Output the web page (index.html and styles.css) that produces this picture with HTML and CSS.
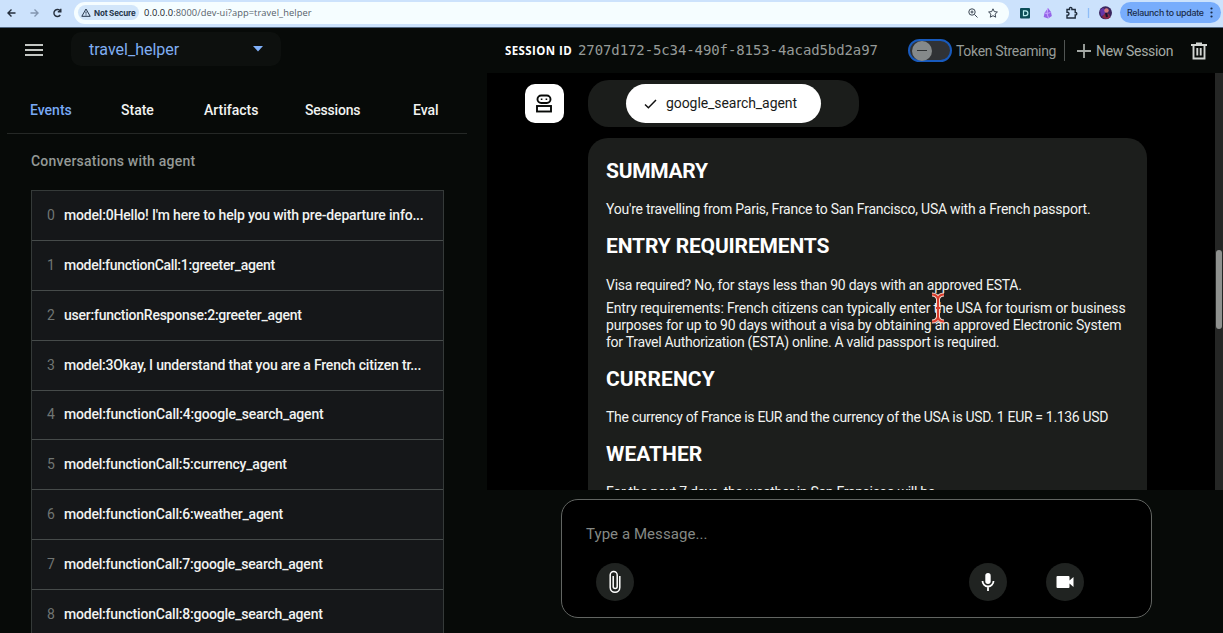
FILE: index.html
```html
<!DOCTYPE html>
<html lang="en">
<head>
<meta charset="utf-8">
<title>travel_helper</title>
<link rel="stylesheet" href="styles.css">
</head>
<body>
<header class="browser">
  <svg class="nav" width="64" height="14" viewBox="0 0 64 14" fill="none" stroke="#252f3d" stroke-width="1.4">
    <path d="M8.500 7H1M4.500 3.500L1 7l3.500 3.500"/>
    <path d="M23.500 7H31M27.500 3.500L31 7l-3.500 3.500" stroke="#8396b0"/>
    <path d="M53.300 9a3.500 3.500 0 1 1 0-4M53.800 2.800v3h-3"/>
  </svg>
  <div class="address">
    <span class="secure"><svg width="10" height="9" viewBox="0 0 10 9" fill="none" stroke="#26364b"><path d="M5 1L9.200 8.300H.8zM5 3.500v2.200M5 6.400v1"/></svg><b>Not Secure</b></span>
    <span class="url"><i>0.0.0.0</i>:8000/dev-ui?app=travel_helper</span>
    <svg class="marks" width="34" height="12" viewBox="0 0 34 12" fill="none" stroke="#3c4754">
      <circle cx="5" cy="5" r="3.200"/><path d="M7.500 7.500L10.500 10.500M3.500 5h3M5 3.500v3"/>
      <path d="M26 1.800l1.300 2.800 3.100.4-2.300 2.100.6 3.100L26 8.700l-2.700 1.500.6-3.100L21.600 5l3.100-.4z"/>
    </svg>
  </div>
  <div class="extensions">
    <svg width="96" height="14" viewBox="0 0 96 14">
      <rect x="0" y="2" width="10" height="10.500" rx="1" fill="#0b4d57"/><path d="M3.500 4.800h2a2.400 2.400 0 0 1 0 4.800h-2z" fill="none" stroke="#b8eef0" stroke-width="1.200"/>
      <path d="M28 2l3 4 .8 4-3.600 2.500-4.500-1.500.8-4z" fill="#9564e8"/><path d="M27.800 2.500l-.8 5 1.500 4.500M24.500 7l2.500.5 3.500-1" stroke="#c8a7ff" fill="none"/>
      <path d="M47 3.500h2.500V2.600a1.200 1.200 0 0 1 2.400 0v.9h3.300v3h.4a1.200 1.200 0 0 1 0 2.400h-.4v3.100H47V9.300h.5a1.500 1.500 0 0 0 0-3H47z" fill="none" stroke="#202d3d" stroke-width="1.400"/>
      <path d="M68.500 2v10" stroke="#8fbdf7" stroke-width="1.300"/>
      <circle cx="85.500" cy="6.800" r="6.500" fill="#3a255e"/><path d="M80 4l3-2 3 2-1 5-4 1z" fill="#6435a8"/><circle cx="86.500" cy="4.500" r="2.200" fill="#d5787d"/><path d="M82 11l3-4 4 1 1.500 3.500A7 7 0 0 1 82 11z" fill="#8a2747"/><path d="M86 7l1 4" stroke="#1c152b" stroke-width="2"/>
    </svg>
  </div>
  <div class="relaunch"><span>Relaunch to update</span><svg width="3" height="11" fill="#1b2c47"><circle cx="1.500" cy="1.500" r="1.100"/><circle cx="1.500" cy="5.500" r="1.100"/><circle cx="1.500" cy="9.500" r="1.100"/></svg></div>
</header>
<div class="app">
  <aside class="sidebar">
    <div class="picker-row">
      <svg class="menu" width="18" height="14" stroke="#c3c7c3" stroke-width="1.900"><path d="M0 2h18M0 7h18M0 12h18"/></svg>
      <div class="picker"><span>travel_helper</span><svg width="10" height="6" fill="#80b1fa"><path d="M0 0h10L5 5.500z"/></svg></div>
    </div>
    <nav class="tabs"><span class="tab active">Events</span><span class="tab state">State</span><span class="tab artifacts">Artifacts</span><span class="tab sessions">Sessions</span><span class="tab">Eval</span></nav>
    <h2 class="conversations">Conversations with agent</h2>
    <div class="events">
      <div class="event"><i>0</i><span class="greeting">model:0Hello! I'm here to help you with pre-departure info...</span></div>
      <div class="event"><i>1</i><span class="greeter">model:functionCall:1:greeter_agent</span></div>
      <div class="event"><i>2</i><span class="response">user:functionResponse:2:greeter_agent</span></div>
      <div class="event"><i>3</i><span>model:3Okay, I understand that you are a French citizen tr...</span></div>
      <div class="event"><i>4</i><span class="greeting">model:functionCall:4:google_search_agent</span></div>
      <div class="event"><i>5</i><span>model:functionCall:5:currency_agent</span></div>
      <div class="event"><i>6</i><span>model:functionCall:6:weather_agent</span></div>
      <div class="event"><i>7</i><span>model:functionCall:7:google_search_agent</span></div>
      <div class="event"><i>8</i><span>model:functionCall:8:google_search_agent</span></div>
    </div>
  </aside>
  <main class="main">
    <div class="toolbar">
      <b class="session-label">SESSION ID</b><span class="session-id">2707d172-5c34-490f-8153-4acad5bd2a97</span>
      <span class="toggle"><span class="knob"></span></span><span class="token">Token Streaming</span>
      <span class="divider"></span>
      <svg class="plus" width="14" height="14" stroke="#a5aaa6" stroke-width="1.800"><path d="M0 7h14M7 0v14"/></svg><span class="new">New Session</span>
      <svg class="trash" width="16" height="18" fill="none" stroke="#d2d5d2" stroke-width="1.900"><path d="M0 3h16M5 1.400h6M2.500 3v13.500h11V3M6.300 6v7.500M9.700 6v7.500"/></svg>
    </div>
    <section class="chat">
      <div class="messages">
        <div class="call-row">
          <div class="avatar"><svg width="18" height="20" viewBox="0 0 18 20" fill="none" stroke="#080a08" stroke-width="1.900"><rect x="2.500" y="1.500" width="13" height="7.500" rx="3.700"/><rect x="2" y="12" width="14" height="5.500"/><path d="M5.800 5.200h1.600M10.600 5.200h1.600" stroke-width="1.500"/></svg></div>
          <div class="call"><div class="chip"><svg width="13" height="10" fill="none" stroke="#111" stroke-width="1.500"><path d="M1 5.500l3.400 3.200L12 1"/></svg><span>google_search_agent</span></div></div>
        </div>
        <article class="reply">
          <h3 class="h-summary">SUMMARY</h3>
          <p class="p-summary">You're travelling from Paris, France to San Francisco, USA with a French passport.</p>
          <h3 class="h-entry">ENTRY REQUIREMENTS</h3>
          <p class="p-visa">Visa required? No, for stays less than 90 days with an approved ESTA.</p>
          <p class="p-entry">Entry requirements: French citizens can typically enter the USA for tourism or business<br>purposes for up to 90 days without a visa by obtaining an approved Electronic System<br><span class="last-line">for Travel Authorization (ESTA) online. A valid passport is required.</span></p>
          <h3 class="h-currency">CURRENCY</h3>
          <p class="p-currency">The currency of France is EUR and the currency of the USA is USD. 1 EUR = 1.136 USD</p>
          <h3 class="h-weather">WEATHER</h3>
          <p class="p-weather">For the next 7 days, the weather in San Francisco will be</p>
        </article>
      </div>
      <div class="scrollbar"><div class="thumb"></div></div>
    </section>
    <div class="composer">
      <div class="placeholder">Type a Message...</div>
      <div class="actions">
        <span class="round"><svg width="12" height="24" fill="none" stroke="#fff" stroke-width="1.500"><path d="M10.800 6v11.500a4.800 4.800 0 0 1-9.600 0V5a3.500 3.500 0 0 1 7 0v11.500a2 2 0 0 1-4 0V6"/></svg></span>
        <span class="round mic"><svg width="14" height="20"><rect x="4.300" y="1" width="5.400" height="11" rx="2.700" fill="#fff"/><path d="M1.500 9a5.500 5.500 0 0 0 11 0M7 14.500V19" fill="none" stroke="#fff" stroke-width="1.800"/></svg></span>
        <span class="round"><svg width="18" height="14" fill="#fff"><path d="M1.500 1h11q1 0 1 1v3.500L17.500 2v10l-4-3.500V12q0 1-1 1h-11q-1 0-1-1V2q0-1 1-1z"/></svg></span>
      </div>
    </div>
  </main>
</div>
<svg class="cursor" width="16" height="32" viewBox="0 0 16 32" fill="none"><path d="M2 2.500q5 0 6 4.500q1-4.500 6-4.500M8 7v18M2 29.500q5 0 6-4.500q1 4.500 6 4.500M5.500 16h5" stroke="#f4d9ce" stroke-width="4"/><path d="M2 2.500q5 0 6 4.500q1-4.500 6-4.500M8 7v18M2 29.500q5 0 6-4.500q1 4.500 6 4.500M6 16h4" stroke="#d83b2b" stroke-width="2"/></svg>
</body>
</html>
```
FILE: styles.css
```css
* { box-sizing: border-box; }
body { margin: 0; width: 1223px; height: 633px; overflow: hidden; background: #000; color: #f1f3f1; font: 500 14px/17px Roboto, sans-serif; }
svg { display: block; flex: none; }
i { font-style: normal; }
h2, h3, p { margin: 0; white-space: nowrap; }
span, b { white-space: nowrap; }

.browser { height: 28px; background: #cce2fc; border-bottom: 1px solid #526780; display: flex; align-items: center; padding: 0 1px 2px 7px; }
.address { margin-left: 3px; width: 935px; height: 22px; border-radius: 11px; background: #f5fdff; display: flex; align-items: center; padding: 0 8px 0 4px; }
.secure { width: 61px; height: 15px; border-radius: 8px; background: #d2e6fa; display: flex; align-items: center; gap: 3px; padding-left: 3px; font: 8px/12px Inter, sans-serif; color: #26364b; letter-spacing: -.18px; }
.url { margin-left: 5px; font: 9.300px/14px "Open Sans", sans-serif; color: #56616a; letter-spacing: .08px; }
.url i { color: #18242c; }
.marks { margin-left: auto; }
.extensions { margin-left: 11px; width: 96px; }
.relaunch { margin-left: 4px; width: 101px; height: 21px; border-radius: 11px; background: #78adfc; color: #182b48; font: 500 8.800px/14px Inter, sans-serif; display: flex; align-items: center; justify-content: space-between; padding: 0 8px 0 7px; letter-spacing: -.24px; }

.app { display: flex; height: 605px; background: #070a08; }
.sidebar { width: 487px; flex: none; overflow: hidden; }
.picker-row { height: 45px; display: flex; align-items: center; padding-left: 25px; gap: 28px; }
.menu { margin-top: -1px; }
.picker { width: 210px; height: 34px; margin-top: -3px; border-radius: 10px; background: #0d100e; color: #80aef2; font-size: 16px; font-weight: 400; display: flex; align-items: center; justify-content: space-between; padding: 0 18px; }
.tabs { margin-left: 7px; width: 460px; height: 61px; border-bottom: 1px solid #252826; display: flex; align-items: center; padding: 14px 0 0 23px; }
.tab.active { width: 91px; color: #78a9f5; }
.state { width: 83px; }
.artifacts { width: 101px; }
.sessions { width: 108px; letter-spacing: -.2px; }
.conversations { margin: 19px 0 20px 31px; font: 500 14px/17px Roboto, sans-serif; color: #949996; letter-spacing: .23px; }
.events { width: 413px; margin-left: 31px; border: 1px solid #353a39; border-bottom: 0; }
.event { height: 49.880px; border-bottom: 1px solid #464b4a; background: #151719; display: flex; align-items: center; padding-left: 15px; letter-spacing: -.2px; }
.event i { width: 17px; color: #707573; font-weight: 400; }
.greeting { letter-spacing: -.18px; }
.greeter { letter-spacing: -.28px; }
.response { letter-spacing: -.24px; }

.main { width: 736px; }
.toolbar { height: 45px; display: flex; align-items: center; padding-left: 18px; }
.session-label { width: 73px; font: 700 11.500px/16px "Open Sans", sans-serif; letter-spacing: .4px; color: #fff; }
.session-id { width: 330px; color: #969b98; font: 14px/17px "DejaVu Sans Mono", monospace; letter-spacing: -.1px; }
.toggle { width: 44px; height: 23px; border: 2px solid #185abc; border-radius: 12px; background: #303235; display: flex; align-items: center; padding-left: 2px; }
.knob { width: 20px; height: 20px; border-radius: 50%; background: #85898a; display: flex; align-items: center; justify-content: center; }
.knob::after { content: ""; width: 10px; height: 1px; background: #303335; }
.token { width: 107px; margin: 1px 0 0 4px; color: #969b98; font-weight: 400; letter-spacing: -.33px; }
.divider { width: 1px; height: 21px; background: #515553; margin-left: 1px; }
.plus { margin-left: 12px; }
.new { margin: 1px 0 0 5px; width: 95px; color: #a5aaa6; font-weight: 400; letter-spacing: -.33px; }
.trash { margin-top: 1px; }

.chat { height: 417px; background: #000; display: flex; justify-content: space-between; }
.messages { height: 417px; padding: 7px 0 0 38px; overflow: hidden; }
.call-row { display: flex; gap: 24px; align-items: flex-start; }
.avatar { width: 39px; height: 39px; margin-top: 4px; border-radius: 10px; background: #fff; display: flex; align-items: center; justify-content: center; padding-right: 2px; }
.call { width: 271px; height: 47px; border-radius: 21px; background: #1b1d1b; padding: 4px 0 0 38px; }
.chip { width: 195px; height: 39px; border-radius: 20px; background: #fff; color: #191b19; font-weight: 400; display: flex; align-items: center; gap: 9px; padding-left: 18px; letter-spacing: -.07px; }
.reply { width: 559px; height: 400px; margin: 11px 0 0 63px; border-radius: 20px; background: #1c1e1c; padding: 21px 18px; }
.reply h3 { font: 700 21px/25px Roboto, sans-serif; color: #fff; }
.reply p { font: 400 14px/16.700px Roboto, sans-serif; }
.reply .h-summary { letter-spacing: -.3px; }
.p-summary { margin-top: 17px; letter-spacing: -.24px; }
.reply .h-entry { margin-top: 16px; letter-spacing: -.15px; }
.p-visa { margin-top: 18px; letter-spacing: -.24px; }
.p-entry { margin-top: 7px; letter-spacing: -.18px; }
.last-line { letter-spacing: -.28px; }
.reply .h-currency { margin-top: 16px; letter-spacing: .12px; }
.p-currency { margin-top: 17px; letter-spacing: -.33px; }
.reply .h-weather { margin-top: 17px; }
.p-weather { margin-top: 17px; letter-spacing: -.3px; }
.scrollbar { width: 8px; background: #252625; padding: 177px 1px 0; }
.thumb { height: 79px; border-radius: 4px; background: #8f918f; }
.composer { margin: 9px 0 0 74px; width: 591px; height: 119px; border: 1px solid #626562; border-radius: 17px; background: #000; padding: 25px 67px 0 24px; }
.placeholder { font: 400 15px/19px Roboto, sans-serif; color: #858985; letter-spacing: .06px; }
.actions { margin: 19px 0 0 10px; display: flex; }
.round { width: 38px; height: 38px; border-radius: 50%; background: #202321; display: flex; align-items: center; justify-content: center; }
.mic { margin: 0 39px 0 auto; }
.cursor { position: absolute; left: 930px; top: 292px; }
```
